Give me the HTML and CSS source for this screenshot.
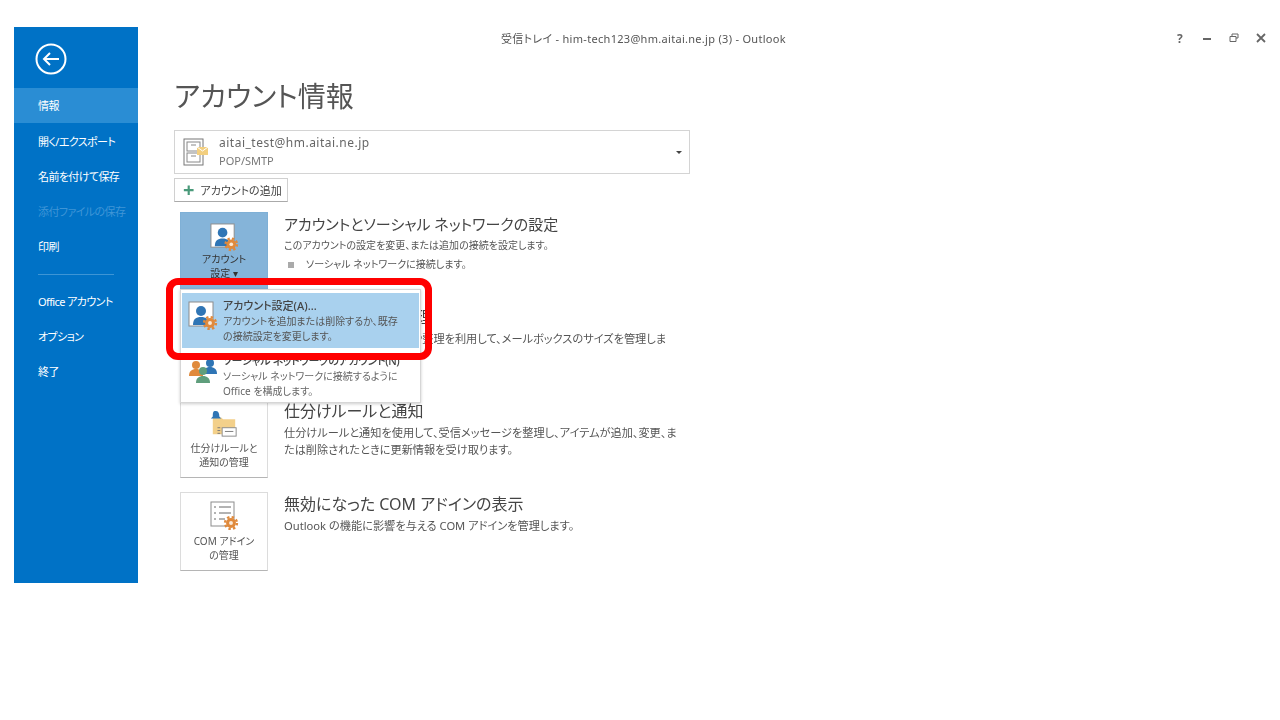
FILE: index.html
```html
<!DOCTYPE html>
<html lang="ja">
<head>
  <meta charset="UTF-8" />
  <title>アカウント情報 - Outlook</title>
  <link rel="stylesheet" href="styles.css">
</head>
<body>
  <svg class="defs" width="0" height="0">
    <symbol id="gear" viewBox="0 0 20 20">
      <circle cx="10" cy="10" r="6.2" fill="#e08a3c" />
      <circle cx="10" cy="10" r="7.4" fill="none" stroke="#e08a3c" stroke-width="3" stroke-dasharray="3 2.8" />
      <circle cx="10" cy="10" r="2.4" fill="#fbe9d6" />
    </symbol>
    <symbol id="account" viewBox="0 0 30 30">
      <rect x="1" y="1" width="24" height="24" fill="#fff" stroke="#8c8c8c" />
      <circle cx="13" cy="10" r="5" fill="#2f75b5" />
      <path d="M5 24c0-6 3-8 8-8s8 2 8 8z" fill="#2f75b5" />
      <use href="#gear" x="14" y="14" width="16" height="16" />
    </symbol>
  </svg>

  <div class="window">
    <nav class="sidebar">
      <div class="back">
        <svg width="32" height="32" viewBox="0 0 32 32">
          <circle cx="16" cy="16" r="14.5" fill="none" stroke="#fff" stroke-width="2" />
          <path d="M24 16H9M15 10l-6 6 6 6" fill="none" stroke="#fff" stroke-width="2" />
        </svg>
      </div>
      <a class="nav-item active">情報</a>
      <a class="nav-item">開く/エクスポート</a>
      <a class="nav-item">名前を付けて保存</a>
      <a class="nav-item disabled">添付ファイルの保存</a>
      <a class="nav-item">印刷</a>
      <div class="nav-sep"></div>
      <a class="nav-item">Office アカウント</a>
      <a class="nav-item">オプション</a>
      <a class="nav-item">終了</a>
    </nav>

    <main class="main">
      <div class="titlebar">
        <span class="window-title">受信トレイ - him-tech123@hm.aitai.ne.jp (3) - Outlook</span>
        <div class="controls">
          <span class="ctrl help">?</span>
          <svg class="ctrl" width="10" height="10" viewBox="0 0 10 10"><path d="M1 6h8" stroke="#666" stroke-width="2" /></svg>
          <svg class="ctrl" width="10" height="10" viewBox="0 0 10 10"><path d="M3 3V1h6v4H7M1 3.500h6v5H1z" fill="none" stroke="#666" /></svg>
          <svg class="ctrl" width="10" height="10" viewBox="0 0 10 10"><path d="M1 1l8 8M9 1l-8 8" stroke="#666" stroke-width="1.800" /></svg>
        </div>
      </div>

      <div class="content">
        <h1 class="page-title">アカウント情報</h1>

        <div class="account-select">
          <svg width="26" height="28" viewBox="0 0 26 28">
            <rect x="1" y="1" width="19" height="26" fill="#fff" stroke="#777" />
            <rect x="4" y="4" width="13" height="9" fill="none" stroke="#888" />
            <rect x="4" y="15" width="13" height="9" fill="none" stroke="#888" />
            <path d="M8 7h5M8 18h5" stroke="#888" />
            <rect x="14" y="9" width="11" height="8" fill="#f3cf7f" />
            <path d="M14 9l5.500 4 5.500-4" fill="none" stroke="#fff" />
          </svg>
          <div class="account-text">
            <div class="account-mail">aitai_test@hm.aitai.ne.jp</div>
            <div class="account-type">POP/SMTP</div>
          </div>
          <span class="caret"></span>
        </div>

        <div class="add-account"><span class="plus">+</span>アカウントの追加</div>

        <div class="sections">
          <section class="section compact">
            <div class="tile selected">
              <svg class="tile-icon" width="29" height="29"><use href="#account" /></svg>
              <span>アカウント<br>設定 ▾</span>
            </div>
            <div class="section-text">
              <h2>アカウントとソーシャル ネットワークの設定</h2>
              <p>このアカウントの設定を変更、または追加の接続を設定します。</p>
              <p class="bullet"><i></i>ソーシャル ネットワークに接続します。</p>
            </div>
          </section>

          <section class="section spaced">
            <div class="tile">
              <span>ツール</span>
            </div>
            <div class="section-text">
              <h2>メールボックスの整理</h2>
              <p>[削除済みアイテム] の削除や整理を利用して、メールボックスのサイズを管理しま<br>す。</p>
            </div>
          </section>

          <section class="section">
            <div class="tile">
              <svg class="tile-icon" width="28" height="28" viewBox="0 0 30 30">
                <path d="M3 8h9l2 2h13v16H3z" fill="#f3d08a" />
                <path d="M6 1c3 0 4 2 4 6l2 2H1l2-2c0-4 0-6 3-6z" fill="#2f75b5" />
                <rect x="13" y="19" width="15" height="9" fill="#fff" stroke="#888" />
                <path d="M16 23h9M8 19h3M8 22h3M8 25h3" stroke="#777" />
              </svg>
              <span>仕分けルールと<br>通知の管理</span>
            </div>
            <div class="section-text">
              <h2>仕分けルールと通知</h2>
              <p>仕分けルールと通知を使用して、受信メッセージを整理し、アイテムが追加、変更、ま<br>たは削除されたときに更新情報を受け取ります。</p>
            </div>
          </section>

          <section class="section">
            <div class="tile">
              <svg class="tile-icon" width="30" height="30" viewBox="0 0 30 30">
                <rect x="2" y="1" width="23" height="24" fill="#fff" stroke="#8c8c8c" />
                <path d="M5 6h2M10 6h12M5 12h2M10 12h12M5 18h2M10 18h6" stroke="#666" />
                <use href="#gear" x="14" y="14" width="16" height="16" />
              </svg>
              <span>COM アドイン<br>の管理</span>
            </div>
            <div class="section-text">
              <h2>無効になった COM アドインの表示</h2>
              <p>Outlook の機能に影響を与える COM アドインを管理します。</p>
            </div>
          </section>
        </div>
      </div>

      <div class="menu">
        <div class="menu-item hover">
          <svg width="30" height="30"><use href="#account" /></svg>
          <div>
            <div class="menu-title">アカウント設定(A)...</div>
            <div class="menu-desc">アカウントを追加または削除するか、既存<br>の接続設定を変更します。</div>
          </div>
        </div>
        <div class="menu-item">
          <svg width="30" height="28" viewBox="0 0 30 28">
            <circle cx="8" cy="9" r="4" fill="#e08a3c" />
            <path d="M1 20c0-5 3-7 7-7s7 2 7 7z" fill="#e08a3c" />
            <circle cx="22" cy="7" r="4" fill="#2f75b5" />
            <path d="M15 18c0-5 3-7 7-7s7 2 7 7z" fill="#2f75b5" />
            <circle cx="15" cy="15" r="4" fill="#5f9e7c" />
            <path d="M8 27c0-5 3-7 7-7s7 2 7 7z" fill="#5f9e7c" />
          </svg>
          <div>
            <div class="menu-title tight">ソーシャル ネットワークのアカウント(N)</div>
            <div class="menu-desc">ソーシャル ネットワークに接続するように<br>Office を構成します。</div>
          </div>
        </div>
      </div>
    </main>
  </div>

  <div class="callout"></div>
</body>
</html>
```

FILE: styles.css
```css
html, body {
  margin: 0;
  background: #fff;
}
body {
  font-family: "Noto Sans", "Noto Sans CJK JP", sans-serif;
  font-feature-settings: "palt";
  color: #444;
  height: 720px;
  overflow: hidden;
}
.defs {
  position: absolute;
}
.window {
  display: flex;
  margin: 27px 0 0 14px;
  height: 556px;
  filter: blur(0.5px);
}

/* left blue bar */
.sidebar {
  width: 124px;
  background: #0072c6;
  color: #fff;
  flex-shrink: 0;
}
.back {
  height: 61px;
  padding: 16px 0 0 21px;
  box-sizing: border-box;
}
.nav-item {
  display: block;
  height: 35px;
  line-height: 35px;
  padding-left: 24px;
  font-size: 11px;
  letter-spacing: -0.6px;
  white-space: nowrap;
}
.nav-item.active {
  background: #2a8dd4;
  margin-bottom: 1px;
}
.nav-item.disabled {
  color: #3f95d6;
}
.nav-sep {
  height: 1px;
  margin: 10px 24px 9px;
  background: #3d95d5;
}

.main {
  position: relative;
  flex: 1;
}
.titlebar {
  display: flex;
  align-items: center;
  height: 22px;
  padding-left: 363px;
  font-size: 11px;
  letter-spacing: 0.3px;
  color: #555;
}
.controls {
  display: flex;
  align-items: center;
  gap: 17px;
  margin-left: auto;
  padding-right: 14px;
}
.ctrl {
  display: block;
}
.help {
  width: 10px;
  text-align: center;
  font-weight: 700;
  font-size: 12px;
  color: #666;
}

.content {
  padding-left: 36px;
}
.page-title {
  margin: 24px 0 0;
  height: 57px;
  line-height: 46px;
  font-size: 28px;
  font-weight: 400;
  color: #555;
}
.account-select {
  display: flex;
  align-items: center;
  box-sizing: border-box;
  width: 516px;
  height: 44px;
  padding: 0 7px 0 8px;
  border: 1px solid #d4d4d4;
}
.account-text {
  margin-left: 10px;
  flex: 1;
}
.account-mail {
  font-size: 12px;
  line-height: 18px;
  letter-spacing: 0.5px;
  color: #666;
}
.account-type {
  font-size: 11px;
  line-height: 18px;
  color: #777;
}
.caret {
  border: 3px solid transparent;
  border-top: 3px solid #444;
  margin-top: 3px;
}
.add-account {
  display: flex;
  align-items: center;
  box-sizing: border-box;
  width: 114px;
  height: 24px;
  margin-top: 4px;
  padding-left: 8px;
  border: 1px solid #d0d0d0;
  border-bottom-color: #aaa;
  font-size: 11px;
  white-space: nowrap;
}
.plus {
  margin-right: 6px;
  font-size: 20px;
  font-weight: 700;
  line-height: 20px;
  color: #4a9a7a;
}

.sections {
  display: flex;
  flex-direction: column;
  gap: 14px;
  margin: 10px 0 0 6px;
}
.section {
  display: flex;
  gap: 16px;
  width: 510px;
}
.section.spaced {
  margin-bottom: 1px;
}
.tile {
  display: flex;
  flex-direction: column;
  align-items: center;
  justify-content: flex-end;
  box-sizing: border-box;
  flex-shrink: 0;
  width: 88px;
  height: 79px;
  padding-bottom: 8px;
  border: 1px solid #dcdcdc;
  border-bottom-color: #b5b5b5;
  font-size: 10px;
  line-height: 14px;
  text-align: center;
  color: #555;
}
.tile.selected {
  background: #85b4d9;
  border-color: #7fb0d6;
  border-bottom: 2px solid #4f84ad;
  padding-bottom: 9px;
  color: #333;
}
.tile-icon {
  margin-bottom: 3px;
}
.tile.selected .tile-icon {
  margin-bottom: 0;
}
.section-text h2 {
  margin: 0;
  font-size: 16px;
  font-weight: 400;
  line-height: 24px;
  color: #444;
}
.section-text p {
  margin: 0;
  font-size: 11.2px;
  line-height: 17px;
  white-space: nowrap;
  color: #555;
}
.section-text h2 + p {
  margin-top: 1px;
}
.compact .section-text h2 {
  font-size: 15px;
}
.compact .section-text p {
  font-size: 10px;
}
.bullet {
  padding-left: 4px;
  margin-top: 2px !important;
}
.bullet i {
  display: inline-block;
  width: 6px;
  height: 6px;
  margin-right: 12px;
  background: #aaa;
}

/* dropdown over the sections */
.menu {
  position: absolute;
  left: 42px;
  top: 262px;
  width: 241px;
  height: 114px;
  padding: 3px 1px 0;
  box-sizing: border-box;
  background: #fff;
  border: 1px solid #d6d6d6;
  box-shadow: 0 1px 3px rgba(0, 0, 0, 0.2);
}
.menu-item {
  display: flex;
  gap: 5px;
  height: 55px;
  padding: 4px 0 0 6px;
  box-sizing: border-box;
}
.menu-item svg {
  flex-shrink: 0;
  margin-top: 4px;
}
.menu-item.hover {
  background: #a9d1ee;
}
.menu-title {
  font-size: 11px;
  font-weight: 500;
  line-height: 17px;
  white-space: nowrap;
}
.menu-title.tight {
  letter-spacing: -0.4px;
}
.menu-desc {
  font-size: 10px;
  line-height: 14.5px;
  color: #666;
}
.menu-item.hover .menu-desc {
  color: #555;
}

.callout {
  position: absolute;
  left: 166px;
  top: 278px;
  box-sizing: border-box;
  width: 266px;
  height: 82px;
  border: 7px solid #f00;
  border-radius: 12px;
}
```
